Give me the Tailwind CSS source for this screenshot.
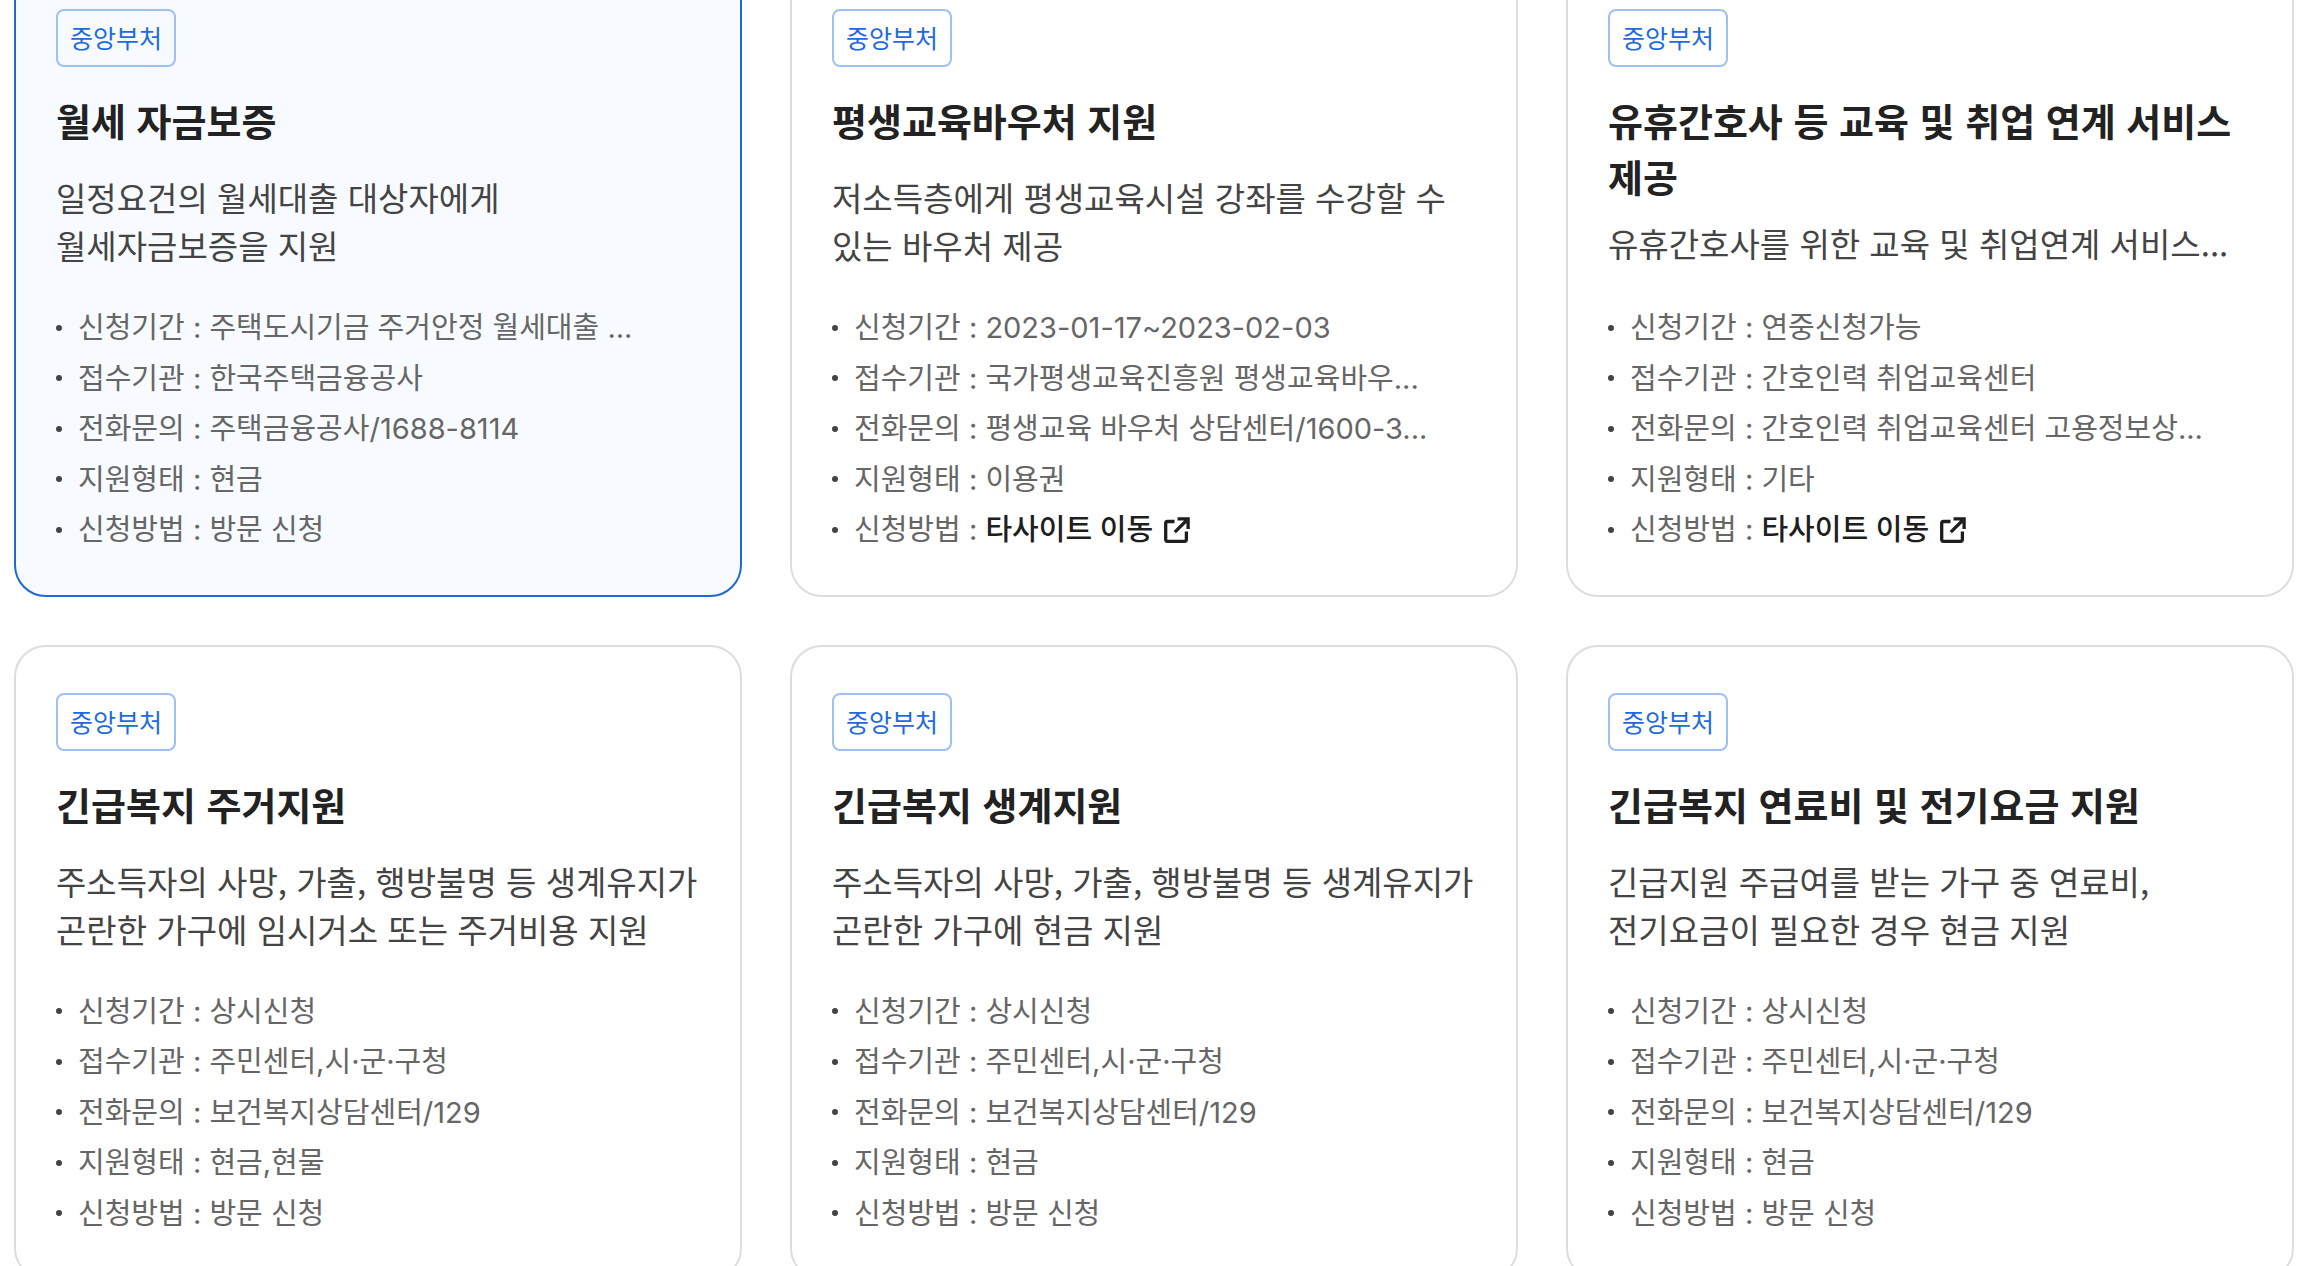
<!DOCTYPE html>
<html lang="ko">
  <head>
    <meta charset="UTF-8" />
    <meta name="viewport" content="width=device-width, initial-scale=1.0" />
    <title>맞춤 서비스 목록</title>
    <script src="https://cdn.jsdelivr.net/npm/@tailwindcss/browser@4"></script>
  </head>
  <body class="h-screen overflow-hidden bg-white font-['Noto_Sans_CJK_KR',sans-serif] break-keep">
    <svg class="hidden">
      <symbol id="icon-external" viewBox="0 0 26 26" fill="none" stroke="currentColor" stroke-width="3.3">
        <path d="M10.5 4.5H3.5Q1.7 4.5 1.7 6.5V22.3Q1.7 24.3 3.5 24.3H20.5Q22.4 24.3 22.4 22.3V14.5" />
        <path d="M13.5 1.9H24.1V12M24 2L10.8 15.2" />
      </symbol>
    </svg>

    <main class="-mt-[39px] px-[14px]">
      <ul class="grid grid-cols-3 gap-12">
        <!-- 월세 자금보증 (선택됨) -->
        <li class="flex flex-col rounded-[32px] border-2 border-[#1d67d8] bg-[#f7fbff] px-10 pt-[46px] pb-[43px]">
          <span class="self-start rounded-lg border-2 border-[#9dc2f2] px-3 pb-[2px] text-[25px] leading-[52px] text-[#1f6ae0]">중앙부처</span>
          <h3 class="mt-[25px] text-[38px] leading-[56px] font-bold text-[#222]">월세 자금보증</h3>
          <p class="mt-[25px] mb-[37px] text-[33px] leading-[48px] text-[#444]">일정요건의 월세대출 대상자에게<br />월세자금보증을 지원</p>
          <ul class="mt-auto flex flex-col gap-[7px] font-[Inter,'Noto_Sans_CJK_KR',sans-serif] text-[29px] leading-normal text-[#666]">
            <li class="flex items-center gap-4"><i class="size-[6px] rounded-full bg-[#444]"></i><span>신청기간 : 주택도시기금 주거안정 월세대출 ...</span></li>
            <li class="flex items-center gap-4"><i class="size-[6px] rounded-full bg-[#444]"></i><span>접수기관 : 한국주택금융공사</span></li>
            <li class="flex items-center gap-4"><i class="size-[6px] rounded-full bg-[#444]"></i><span>전화문의 : 주택금융공사/1688-8114</span></li>
            <li class="flex items-center gap-4"><i class="size-[6px] rounded-full bg-[#444]"></i><span>지원형태 : 현금</span></li>
            <li class="flex items-center gap-4"><i class="size-[6px] rounded-full bg-[#444]"></i><span>신청방법 : 방문 신청</span></li>
          </ul>
        </li>

        <!-- 평생교육바우처 지원 -->
        <li class="flex flex-col rounded-[32px] border-2 border-[#ddd] bg-white px-10 pt-[46px] pb-[43px]">
          <span class="self-start rounded-lg border-2 border-[#9dc2f2] px-3 pb-[2px] text-[25px] leading-[52px] text-[#1f6ae0]">중앙부처</span>
          <h3 class="mt-[25px] text-[38px] leading-[56px] font-bold text-[#222]">평생교육바우처 지원</h3>
          <p class="mt-[25px] mb-[37px] text-[33px] leading-[48px] text-[#444]">저소득층에게 평생교육시설 강좌를 수강할 수<br />있는 바우처 제공</p>
          <ul class="mt-auto flex flex-col gap-[7px] font-[Inter,'Noto_Sans_CJK_KR',sans-serif] text-[29px] leading-normal text-[#666]">
            <li class="flex items-center gap-4"><i class="size-[6px] rounded-full bg-[#444]"></i><span>신청기간 : 2023-01-17~2023-02-03</span></li>
            <li class="flex items-center gap-4"><i class="size-[6px] rounded-full bg-[#444]"></i><span>접수기관 : 국가평생교육진흥원 평생교육바우...</span></li>
            <li class="flex items-center gap-4"><i class="size-[6px] rounded-full bg-[#444]"></i><span>전화문의 : 평생교육 바우처 상담센터/1600-3...</span></li>
            <li class="flex items-center gap-4"><i class="size-[6px] rounded-full bg-[#444]"></i><span>지원형태 : 이용권</span></li>
            <li class="flex items-center gap-4">
              <i class="size-[6px] rounded-full bg-[#444]"></i>
              <span>신청방법 : <a href="#" class="font-medium text-[#1e1e1e]">타사이트 이동<svg class="ml-[11px] inline size-[26px] align-[-3px]"><use href="#icon-external" /></svg></a></span>
            </li>
          </ul>
        </li>

        <!-- 유휴간호사 교육 -->
        <li class="flex flex-col rounded-[32px] border-2 border-[#ddd] bg-white px-10 pt-[46px] pb-[43px]">
          <span class="self-start rounded-lg border-2 border-[#9dc2f2] px-3 pb-[2px] text-[25px] leading-[52px] text-[#1f6ae0]">중앙부처</span>
          <h3 class="mt-[25px] text-[38px] leading-[56px] font-bold text-[#222]">유휴간호사 등 교육 및 취업 연계 서비스 제공</h3>
          <p class="mt-[15px] mb-[37px] text-[33px] leading-[48px] text-[#444]">유휴간호사를 위한 교육 및 취업연계 서비스...</p>
          <ul class="mt-auto flex flex-col gap-[7px] font-[Inter,'Noto_Sans_CJK_KR',sans-serif] text-[29px] leading-normal text-[#666]">
            <li class="flex items-center gap-4"><i class="size-[6px] rounded-full bg-[#444]"></i><span>신청기간 : 연중신청가능</span></li>
            <li class="flex items-center gap-4"><i class="size-[6px] rounded-full bg-[#444]"></i><span>접수기관 : 간호인력 취업교육센터</span></li>
            <li class="flex items-center gap-4"><i class="size-[6px] rounded-full bg-[#444]"></i><span>전화문의 : 간호인력 취업교육센터 고용정보상...</span></li>
            <li class="flex items-center gap-4"><i class="size-[6px] rounded-full bg-[#444]"></i><span>지원형태 : 기타</span></li>
            <li class="flex items-center gap-4">
              <i class="size-[6px] rounded-full bg-[#444]"></i>
              <span>신청방법 : <a href="#" class="font-medium text-[#1e1e1e]">타사이트 이동<svg class="ml-[11px] inline size-[26px] align-[-3px]"><use href="#icon-external" /></svg></a></span>
            </li>
          </ul>
        </li>

        <!-- 긴급복지 주거지원 -->
        <li class="flex flex-col rounded-[32px] border-2 border-[#ddd] bg-white px-10 pt-[46px] pb-[43px]">
          <span class="self-start rounded-lg border-2 border-[#9dc2f2] px-3 pb-[2px] text-[25px] leading-[52px] text-[#1f6ae0]">중앙부처</span>
          <h3 class="mt-[25px] text-[38px] leading-[56px] font-bold text-[#222]">긴급복지 주거지원</h3>
          <p class="mt-[25px] mb-[37px] text-[33px] leading-[48px] text-[#444]">주소득자의 사망, 가출, 행방불명 등 생계유지가<br />곤란한 가구에 임시거소 또는 주거비용 지원</p>
          <ul class="mt-auto flex flex-col gap-[7px] font-[Inter,'Noto_Sans_CJK_KR',sans-serif] text-[29px] leading-normal text-[#666]">
            <li class="flex items-center gap-4"><i class="size-[6px] rounded-full bg-[#444]"></i><span>신청기간 : 상시신청</span></li>
            <li class="flex items-center gap-4"><i class="size-[6px] rounded-full bg-[#444]"></i><span>접수기관 : 주민센터,시·군·구청</span></li>
            <li class="flex items-center gap-4"><i class="size-[6px] rounded-full bg-[#444]"></i><span>전화문의 : 보건복지상담센터/129</span></li>
            <li class="flex items-center gap-4"><i class="size-[6px] rounded-full bg-[#444]"></i><span>지원형태 : 현금,현물</span></li>
            <li class="flex items-center gap-4"><i class="size-[6px] rounded-full bg-[#444]"></i><span>신청방법 : 방문 신청</span></li>
          </ul>
        </li>

        <!-- 긴급복지 생계지원 -->
        <li class="flex flex-col rounded-[32px] border-2 border-[#ddd] bg-white px-10 pt-[46px] pb-[43px]">
          <span class="self-start rounded-lg border-2 border-[#9dc2f2] px-3 pb-[2px] text-[25px] leading-[52px] text-[#1f6ae0]">중앙부처</span>
          <h3 class="mt-[25px] text-[38px] leading-[56px] font-bold text-[#222]">긴급복지 생계지원</h3>
          <p class="mt-[25px] mb-[37px] text-[33px] leading-[48px] text-[#444]">주소득자의 사망, 가출, 행방불명 등 생계유지가<br />곤란한 가구에 현금 지원</p>
          <ul class="mt-auto flex flex-col gap-[7px] font-[Inter,'Noto_Sans_CJK_KR',sans-serif] text-[29px] leading-normal text-[#666]">
            <li class="flex items-center gap-4"><i class="size-[6px] rounded-full bg-[#444]"></i><span>신청기간 : 상시신청</span></li>
            <li class="flex items-center gap-4"><i class="size-[6px] rounded-full bg-[#444]"></i><span>접수기관 : 주민센터,시·군·구청</span></li>
            <li class="flex items-center gap-4"><i class="size-[6px] rounded-full bg-[#444]"></i><span>전화문의 : 보건복지상담센터/129</span></li>
            <li class="flex items-center gap-4"><i class="size-[6px] rounded-full bg-[#444]"></i><span>지원형태 : 현금</span></li>
            <li class="flex items-center gap-4"><i class="size-[6px] rounded-full bg-[#444]"></i><span>신청방법 : 방문 신청</span></li>
          </ul>
        </li>

        <!-- 긴급복지 연료비 -->
        <li class="flex flex-col rounded-[32px] border-2 border-[#ddd] bg-white px-10 pt-[46px] pb-[43px]">
          <span class="self-start rounded-lg border-2 border-[#9dc2f2] px-3 pb-[2px] text-[25px] leading-[52px] text-[#1f6ae0]">중앙부처</span>
          <h3 class="mt-[25px] text-[38px] leading-[56px] font-bold text-[#222]">긴급복지 연료비 및 전기요금 지원</h3>
          <p class="mt-[25px] mb-[37px] text-[33px] leading-[48px] text-[#444]">긴급지원 주급여를 받는 가구 중 연료비,<br />전기요금이 필요한 경우 현금 지원</p>
          <ul class="mt-auto flex flex-col gap-[7px] font-[Inter,'Noto_Sans_CJK_KR',sans-serif] text-[29px] leading-normal text-[#666]">
            <li class="flex items-center gap-4"><i class="size-[6px] rounded-full bg-[#444]"></i><span>신청기간 : 상시신청</span></li>
            <li class="flex items-center gap-4"><i class="size-[6px] rounded-full bg-[#444]"></i><span>접수기관 : 주민센터,시·군·구청</span></li>
            <li class="flex items-center gap-4"><i class="size-[6px] rounded-full bg-[#444]"></i><span>전화문의 : 보건복지상담센터/129</span></li>
            <li class="flex items-center gap-4"><i class="size-[6px] rounded-full bg-[#444]"></i><span>지원형태 : 현금</span></li>
            <li class="flex items-center gap-4"><i class="size-[6px] rounded-full bg-[#444]"></i><span>신청방법 : 방문 신청</span></li>
          </ul>
        </li>
      </ul>
    </main>
  </body>
</html>
